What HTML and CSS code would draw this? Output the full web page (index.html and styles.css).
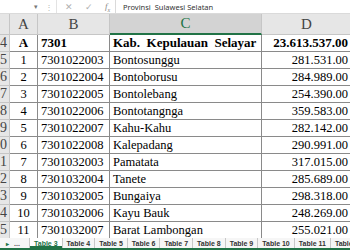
FILE: index.html
```html
<!DOCTYPE html>
<html lang="id">
  <head>
    <meta charset="UTF-8" />
    <meta name="viewport" content="width=device-width, initial-scale=1.0" />
    <title>Table 3</title>
    <link rel="stylesheet" href="styles.css">
  </head>
  <body>
    <div class="topbar">
      <div class="namebox"><span class="caret">▾</span></div>
      <span class="dots">⋮</span>
      <div class="tools">
        <span class="tool">✕</span>
        <span class="tool">✓</span>
        <span class="tool fx">f<sub>x</sub></span>
      </div>
      <div class="formula">Provinsi&nbsp; Sulawesi Selatan</div>
    </div>

    <div class="viewport">
      <div class="sheet">
        <div class="hd rh"></div>
        <div class="hd">A</div>
        <div class="hd">B</div>
        <div class="hd active">C</div>
        <div class="hd">D</div>

        <div class="rh">4</div>
        <div class="cell num bold">A</div>
        <div class="cell bold">7301</div>
        <div class="cell bold">Kab.&nbsp; Kepulauan&nbsp; Selayar</div>
        <div class="cell val bold">23.613.537.00</div>

        <div class="rh">5</div>
        <div class="cell num">1</div>
        <div class="cell">7301022003</div>
        <div class="cell">Bontosunggu</div>
        <div class="cell val">281.531.00</div>

        <div class="rh">6</div>
        <div class="cell num">2</div>
        <div class="cell">7301022004</div>
        <div class="cell">Bontoborusu</div>
        <div class="cell val">284.989.00</div>

        <div class="rh">7</div>
        <div class="cell num">3</div>
        <div class="cell">7301022005</div>
        <div class="cell">Bontolebang</div>
        <div class="cell val">254.390.00</div>

        <div class="rh">8</div>
        <div class="cell num">4</div>
        <div class="cell">7301022006</div>
        <div class="cell">Bontotangnga</div>
        <div class="cell val">359.583.00</div>

        <div class="rh">9</div>
        <div class="cell num">5</div>
        <div class="cell">7301022007</div>
        <div class="cell">Kahu-Kahu</div>
        <div class="cell val">282.142.00</div>

        <div class="rh">10</div>
        <div class="cell num">6</div>
        <div class="cell">7301022008</div>
        <div class="cell">Kalepadang</div>
        <div class="cell val">290.991.00</div>

        <div class="rh">11</div>
        <div class="cell num">7</div>
        <div class="cell">7301032003</div>
        <div class="cell">Pamatata</div>
        <div class="cell val">317.015.00</div>

        <div class="rh">12</div>
        <div class="cell num">8</div>
        <div class="cell">7301032004</div>
        <div class="cell">Tanete</div>
        <div class="cell val">285.689.00</div>

        <div class="rh">13</div>
        <div class="cell num">9</div>
        <div class="cell">7301032005</div>
        <div class="cell">Bungaiya</div>
        <div class="cell val">298.318.00</div>

        <div class="rh">14</div>
        <div class="cell num">10</div>
        <div class="cell">7301032006</div>
        <div class="cell">Kayu Bauk</div>
        <div class="cell val">248.269.00</div>

        <div class="rh">15</div>
        <div class="cell num">11</div>
        <div class="cell">7301032007</div>
        <div class="cell">Barat Lambongan</div>
        <div class="cell val">255.021.00</div>
      </div>
    </div>

    <div class="tabs">
      <span class="nav">▸</span>
      <span class="more">...</span>
      <span class="tab current">Table 3</span>
      <span class="tab">Table 4</span>
      <span class="tab">Table 5</span>
      <span class="tab">Table 6</span>
      <span class="tab">Table 7</span>
      <span class="tab">Table 8</span>
      <span class="tab">Table 9</span>
      <span class="tab">Table 10</span>
      <span class="tab">Table 11</span>
      <span class="tab">Table 12</span>
    </div>
  </body>
</html>
```

FILE: styles.css
```css
* {
  margin: 0;
  padding: 0;
  box-sizing: border-box;
}

body {
  width: 350px;
  height: 250px;
  overflow: hidden;
  background-color: #fff;
  color: #000;
  font-family: "Liberation Serif", serif;
}

/* formula bar */
.topbar {
  height: 14px;
  display: flex;
  align-items: center;
  border-bottom: 1px solid #dadada;
  font-family: "Noto Sans", sans-serif;
  overflow: hidden;
}

.namebox {
  width: 42px;
  height: 100%;
  display: flex;
  justify-content: flex-end;
  align-items: center;
  padding-right: 4px;
}

.caret {
  font-size: 7px;
  color: #777;
}

.dots {
  width: 14px;
  text-align: center;
  font-size: 8px;
  color: #b5b5b5;
}

.tools {
  width: 59px;
  height: 100%;
  display: flex;
  align-items: center;
  gap: 12px;
  padding-left: 8px;
  border-left: 1px solid #e3e3e3;
}

.tool {
  font-size: 9px;
  color: #b0b0b0;
}

.fx {
  font-family: "Liberation Serif", serif;
  font-style: italic;
  font-size: 9px;
  color: #888;
}

.fx sub {
  font-size: 6px;
}

.formula {
  flex: 1;
  height: 100%;
  display: flex;
  align-items: center;
  padding-left: 7px;
  border-left: 1px solid #dadada;
  font-size: 7.5px;
  color: #333;
  white-space: nowrap;
}

/* grid */
.viewport {
  height: 224px;
  overflow: hidden;
}

.sheet {
  display: grid;
  grid-template-columns: 30px 28px 72px 152px 90px;
  grid-template-rows: 21px;
  grid-auto-rows: 17px;
  margin-left: -20px;
  font-size: 12.5px;
}

.sheet > div {
  display: flex;
  align-items: center;
  white-space: nowrap;
  overflow: hidden;
}

.hd {
  justify-content: center;
  background-color: #e6e6e6;
  border-right: 1px solid #c6c6c6;
  border-bottom: 1px solid #c6c6c6;
  color: #444;
  font-size: 15px;
}

.hd.active {
  background-color: #d3d3d3;
  color: #217346;
  border-bottom: 2px solid #217346;
}

.rh {
  justify-content: flex-end;
  padding-right: 2px;
  background-color: #e6e6e6;
  border-right: 1px solid #c6c6c6;
  border-bottom: 1px solid #c6c6c6;
  color: #444;
  font-size: 14px;
}

.cell {
  padding: 0 3px;
  border-right: 1px solid #8a8a8a;
  border-bottom: 1px solid #8a8a8a;
}

.num {
  justify-content: center;
}

.val {
  justify-content: flex-end;
}

.bold {
  font-weight: bold;
  font-size: 13px;
}

/* sheet tabs */
.tabs {
  height: 12px;
  display: flex;
  align-items: stretch;
  background-color: #f6f6f6;
  border-bottom: 2px solid #217346;
  font-family: "Liberation Sans", sans-serif;
  font-size: 7px;
  font-weight: bold;
  color: #333;
  white-space: nowrap;
  overflow: hidden;
}

.tabs > span {
  flex-shrink: 0;
}

.nav {
  width: 14px;
  display: flex;
  align-items: center;
  justify-content: center;
  font-size: 6px;
  color: #217346;
}

.more {
  width: 15px;
  display: flex;
  align-items: center;
  color: #555;
}

.tab {
  display: flex;
  align-items: center;
  padding: 0 4px;
  border-right: 1px solid #c8c8c8;
}

.tab.current {
  background-color: #fff;
  color: #217346;
  border-left: 1px solid #c8c8c8;
  box-shadow: inset 0 -2px 0 #217346;
}
```
